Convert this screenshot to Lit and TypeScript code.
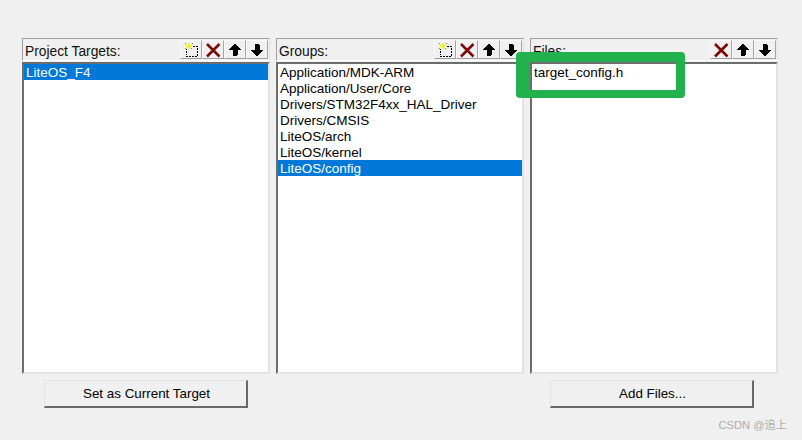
import { LitElement, html, css, svg } from "lit";
import { customElement } from "lit/decorators.js";

const newIcon = svg`<svg class="ic" width="18" height="16" viewBox="0 0 18 16" shape-rendering="crispEdges">
<path d="M5 4h1v1H5zM8 4h2v1H8zM11 4h2v1h-2zM14 4h2v1h-2zM15 6h1v2h-1zM15 9h1v2h-1zM15 12h1v2h-1zM13 14h2v1h-2zM10 14h2v1h-2zM7 14h2v1H7zM4 14h2v1H4zM4 12h1v1H4zM4 9h1v2H4zM4 7h1v1H4z" fill="#000"/>
<path d="M6 1h2v2h2v2H8v2H6V5H4V3h2z" fill="#f5f51e"/>
<path d="M3 1h1v1H3zM10 1h1v1h-1zM3 6h1v1H3zM9 6h1v1H9z" fill="#8a8a20"/></svg>`;
const delIcon = svg`<svg class="ic" width="16" height="16" viewBox="0 0 16 16"><path d="M2 2L14.5 14.5M14.5 2L2 14.5" stroke="#7b0a0a" stroke-width="2.6" fill="none"/></svg>`;
const upIcon = svg`<svg class="ic" width="14" height="14" viewBox="0 0 14 14" shape-rendering="crispEdges"><path d="M6 1h2v1h1v1h1v1h1v1h1v1h1v1H10v5H9v1H5V7H1V6h1V5h1V4h1V3h1V2h1z" fill="#000"/></svg>`;
const downIcon = svg`<svg class="ic" width="14" height="14" viewBox="0 0 14 14" shape-rendering="crispEdges"><path d="M6 13h2v-1h1v-1h1v-1h1V9h1V8h1V7H10V2H9V1H5v6H1v1h1v1h1v1h1v1h1v1h1z" fill="#000"/></svg>`;

@customElement("app-root")
export class AppRoot extends LitElement {
  static styles = css`
    :host {
      display: block;
      width: 802px;
      height: 440px;
      background: #f0f0f0;
      position: relative;
      overflow: hidden;
      font-family: "Liberation Sans", Arial, sans-serif;
      font-size: 13.5px;
      color: #000;
    }
    .panels {
      display: flex;
      gap: 6px;
      padding: 38px 0 0 22px;
    }
    .panel { width: 248px; display: flex; flex-direction: column; }
    .head {
      height: 23px;
      box-sizing: border-box;
      border: 1px solid #a0a0a0;
      border-right-color: #e3e3e3;
      border-bottom: 1px solid #fff;
      display: flex;
      align-items: flex-start;
      justify-content: space-between;
      padding: 1px 1px 0 2px;
    }
    .title { position: relative; top: 4px; font-size: 13.8px; line-height: 16px; color: #111; }
    .tools { display: flex; }
    .tool {
      width: 22px;
      height: 19px;
      box-sizing: border-box;
      border: 1px solid #f8f8f8;
      border-right-color: #a6a6a6;
      border-bottom-color: #a0a0a0;
      background: #f0f0f0;
      display: flex;
      align-items: center;
      justify-content: center;
    }
    .list {
      height: 312px;
      margin-top: 1px;
      box-sizing: border-box;
      background: #fff;
      border: 2px solid #6d6d6d;
      border-right-color: #e3e3e3;
      border-bottom-color: #e3e3e3;
    }
    .row { height: 16px; line-height: 18px; padding-left: 2px; white-space: nowrap; }
    .row.sel { background: #0078d7; color: #fff; }
    .actions { display: flex; padding: 6px 0 0 44px; }
    .btn {
      width: 204px;
      height: 28px;
      box-sizing: border-box;
      background: #f0f0f0;
      border: 1px solid #e3e3e3;
      border-right: 2px solid #696969;
      border-bottom: 2px solid #696969;
      display: flex;
      align-items: center;
      justify-content: center;
      font-family: inherit;
      font-size: 13.4px;
      color: #000;
      padding: 0 0 0 2px;
    }
    .btn.add { margin-left: 302px; }
    .mark {
      position: absolute;
      left: 516px;
      top: 52px;
      width: 169px;
      height: 46px;
      box-sizing: border-box;
      border-style: solid;
      border-color: #22b14c;
      border-width: 10px 9px 8px 14px;
      border-radius: 4px;
    }
    .wm {
      position: absolute;
      right: 15px;
      top: 418px;
      font-size: 11.2px;
      line-height: 14px;
      color: #adadad;
      font-family: "Liberation Sans", "Noto Sans CJK SC", sans-serif;
    }
  `;

  private panel(title: string, rows: string[], sel: number, withNew: boolean) {
    return html`<div class="panel">
      <div class="head">
        <span class="title">${title}</span>
        <div class="tools">
          ${withNew ? html`<div class="tool">${newIcon}</div>` : ""}
          <div class="tool">${delIcon}</div>
          <div class="tool">${upIcon}</div>
          <div class="tool">${downIcon}</div>
        </div>
      </div>
      <div class="list">
        ${rows.map((r, i) => html`<div class="row ${i === sel ? "sel" : ""}">${r}</div>`)}
      </div>
    </div>`;
  }

  render() {
    return html`
      <div class="panels">
        ${this.panel("Project Targets:", ["LiteOS_F4"], 0, true)}
        ${this.panel("Groups:", [
          "Application/MDK-ARM",
          "Application/User/Core",
          "Drivers/STM32F4xx_HAL_Driver",
          "Drivers/CMSIS",
          "LiteOS/arch",
          "LiteOS/kernel",
          "LiteOS/config",
        ], 6, true)}
        ${this.panel("Files:", ["target_config.h"], -1, false)}
      </div>
      <div class="actions">
        <button class="btn">Set as Current Target</button>
        <button class="btn add">Add Files...</button>
      </div>
      <div class="mark"></div>
      <div class="wm">CSDN @追上</div>
    `;
  }
}
